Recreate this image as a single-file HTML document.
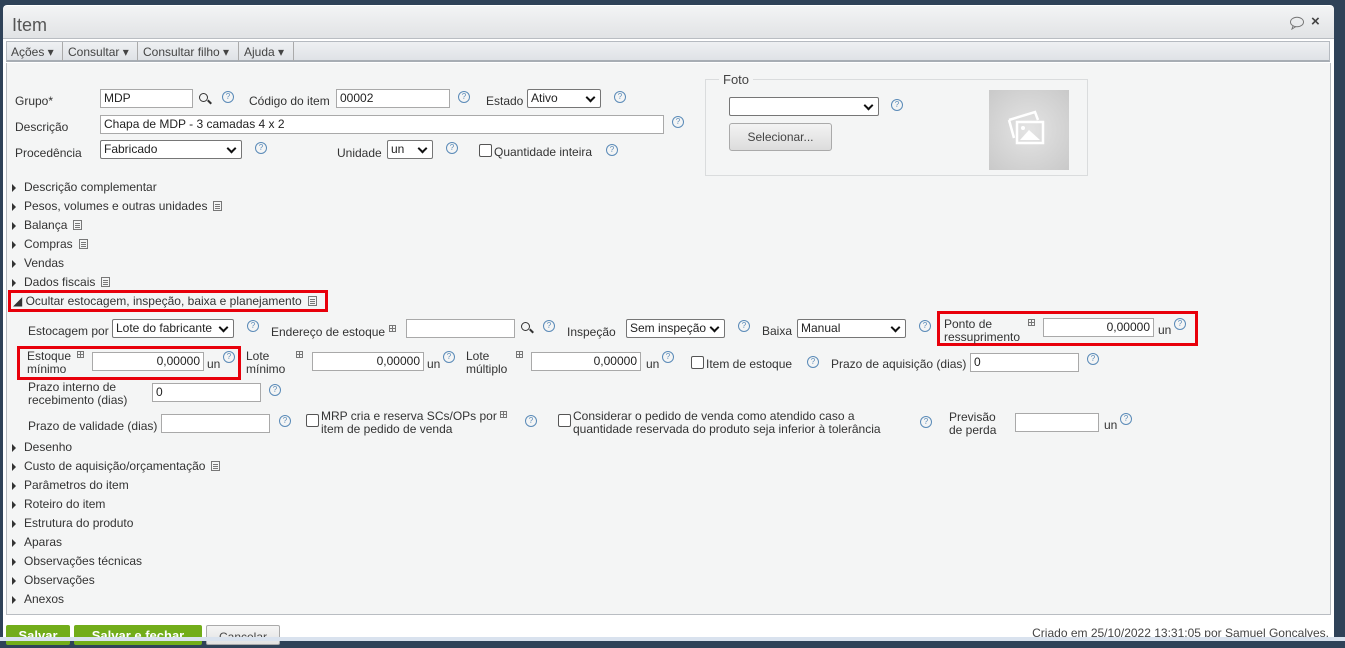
<!DOCTYPE html>
<html><head><meta charset="utf-8"><style>
*{box-sizing:border-box;margin:0;padding:0}
body{width:1345px;height:641px;overflow:hidden;background:#2f4258;font-family:"Liberation Sans","DejaVu Sans",sans-serif;font-size:12px;color:#333;position:relative}
.a{position:absolute;white-space:nowrap}
.in{position:absolute;background:#fff;border:1px solid #a9a9a9;height:19px;padding:0 3px;line-height:17px;font-size:12px;color:#222}
.r{text-align:right}
.sel{position:absolute;background:#fff;border:1px solid #767676;border-radius:2px;height:19px;padding:0 3px;line-height:17px;color:#222}
.sel:after{content:"";position:absolute;right:6px;top:4px;width:5px;height:5px;border-right:2px solid #111;border-bottom:2px solid #111;transform:rotate(45deg)}
.q{position:absolute;width:12px;height:12px;border:1px solid #5b8bb8;border-radius:50%;font-size:8px;line-height:10px;text-align:center;color:#5b8bb8}
.cb{position:absolute;width:13px;height:13px;border:1px solid #555;border-radius:2px;background:#fff}
.tr{position:absolute;left:12px;white-space:nowrap}
.tr:before{content:"";display:inline-block;border-left:4px solid #333;border-top:4px solid transparent;border-bottom:4px solid transparent;margin-right:8px;vertical-align:-1px}
.doc{display:inline-block;width:9px;height:10px;border:1px solid #777;margin-left:6px;vertical-align:-1px;background:linear-gradient(#777,#777) 1px 2px/5px 1px no-repeat,linear-gradient(#777,#777) 1px 4px/5px 1px no-repeat,linear-gradient(#777,#777) 1px 6px/5px 1px no-repeat}
.g{position:absolute;width:7px;height:7px;border:1px solid #777;background:linear-gradient(#777,#777) 2px 0/1px 7px no-repeat,linear-gradient(#777,#777) 0 2px/7px 1px no-repeat}
.rb{position:absolute;border:3px solid #e8000b}
.mag{position:absolute;width:9px;height:9px;border:1.5px solid #333;border-radius:50%}
.mag:after{content:"";position:absolute;left:7px;top:7px;width:5px;height:2px;background:#333;transform:rotate(45deg)}
</style></head><body>
<div class="a" style="left:3px;top:5px;width:1331px;height:636px;background:#fff;border-radius:4px 4px 0 0"></div>
<div class="a" style="left:3px;top:6px;width:1331px;height:33px;background:linear-gradient(#f3f4f5,#e1e3e5);border-radius:4px 4px 0 0;border-bottom:1px solid #b9bdc2"></div>
<div class="a" style="left:12px;top:15px;font-size:18px;color:#555">Item</div>
<svg class="a" style="left:1289px;top:16px" width="16" height="14"><ellipse cx="8" cy="6" rx="6.5" ry="4.8" fill="none" stroke="#777"/><path d="M4 10 L3 13 L7 10.5" fill="none" stroke="#777"/></svg>
<div class="a" style="left:1311px;top:13px;font-size:15px;font-weight:bold;color:#444">×</div>
<div class="a" style="left:6px;top:41px;width:1324px;height:21px;background:linear-gradient(#eef0f2,#dfe2e6);border:1px solid #b5bac0;border-bottom:2px solid #a7adb4"></div>
<div class="a" style="left:11px;top:45px;color:#444">Ações ▾</div><div class="a" style="left:62px;top:42px;width:1px;height:19px;background:#aaa"></div>
<div class="a" style="left:68px;top:45px;color:#444">Consultar ▾</div><div class="a" style="left:137px;top:42px;width:1px;height:19px;background:#aaa"></div>
<div class="a" style="left:143px;top:45px;color:#444">Consultar filho ▾</div><div class="a" style="left:238px;top:42px;width:1px;height:19px;background:#aaa"></div>
<div class="a" style="left:244px;top:45px;color:#444">Ajuda ▾</div><div class="a" style="left:293px;top:42px;width:1px;height:19px;background:#aaa"></div>
<div class="a" style="left:6px;top:63px;width:1325px;height:552px;background:#f4f5f5;border:1px solid #b9bdc2;border-top:none"></div>

<div class="a" style="left:15px;top:94px">Grupo*</div>
<div class="in" style="left:100px;top:89px;width:93px">MDP</div>
<div class="mag" style="left:199px;top:93px"></div>
<div class="q" style="left:222px;top:91px">?</div>
<div class="a" style="left:249px;top:94px">Código do item</div>
<div class="in" style="left:336px;top:89px;width:114px">00002</div>
<div class="q" style="left:458px;top:91px">?</div>
<div class="a" style="left:486px;top:94px">Estado</div>
<div class="sel" style="left:527px;top:89px;width:74px">Ativo</div>
<div class="q" style="left:614px;top:91px">?</div>
<div class="a" style="left:15px;top:120px">Descrição</div>
<div class="in" style="left:100px;top:115px;width:564px">Chapa de MDP - 3 camadas 4 x 2</div>
<div class="q" style="left:672px;top:116px">?</div>
<div class="a" style="left:15px;top:146px">Procedência</div>
<div class="sel" style="left:100px;top:140px;width:142px">Fabricado</div>
<div class="q" style="left:255px;top:142px">?</div>
<div class="a" style="left:337px;top:146px">Unidade</div>
<div class="sel" style="left:387px;top:140px;width:46px">un</div>
<div class="q" style="left:446px;top:142px">?</div>
<div class="cb" style="left:479px;top:144px"></div>
<div class="a" style="left:494px;top:145px">Quantidade inteira</div>
<div class="q" style="left:606px;top:144px">?</div>

<div class="a" style="left:705px;top:79px;width:383px;height:97px;border:1px solid #dadcdd"></div>
<div class="a" style="left:719px;top:72px;padding:0 4px;background:#f4f5f5;font-size:13px;color:#444">Foto</div>
<div class="sel" style="left:729px;top:97px;width:150px"></div>
<div class="q" style="left:891px;top:99px">?</div>
<div class="a" style="left:729px;top:123px;width:103px;height:28px;border:1px solid #aaa;border-radius:3px;background:linear-gradient(#f3f3f3,#dcdcdc);text-align:center;line-height:26px;color:#444">Selecionar...</div>
<div class="a" style="left:989px;top:90px;width:80px;height:80px;background:radial-gradient(circle,#e4e4e4,#c9c9c9)"></div>
<svg class="a" style="left:1005px;top:108px" width="44" height="40"><g fill="none" stroke="#fff" stroke-width="2.5"><path d="M4 12 L30 4 L33 12"/><path d="M4 12 L9 30"/><rect x="12" y="14" width="26" height="21"/></g><path d="M15 32 L24 22 L35 32Z" fill="#fff"/><circle cx="18" cy="20" r="2" fill="#fff"/></svg>

<div class="tr" style="top:180px">Descrição complementar</div>
<div class="tr" style="top:199px">Pesos, volumes e outras unidades<span class="doc"></span></div>
<div class="tr" style="top:218px">Balança<span class="doc"></span></div>
<div class="tr" style="top:237px">Compras<span class="doc"></span></div>
<div class="tr" style="top:256px">Vendas</div>
<div class="tr" style="top:275px">Dados fiscais<span class="doc"></span></div>
<div class="a" style="left:13px;top:294px;color:#333">◢&nbsp;Ocultar estocagem, inspeção, baixa e planejamento<span class="doc"></span></div>
<div class="rb" style="left:8px;top:290px;width:320px;height:22px"></div>

<div class="a" style="left:28px;top:324px">Estocagem por</div>
<div class="sel" style="left:112px;top:319px;width:122px">Lote do fabricante</div>
<div class="q" style="left:247px;top:320px">?</div>
<div class="a" style="left:271px;top:325px">Endereço de estoque</div>
<div class="g" style="left:389px;top:325px"></div>
<div class="in" style="left:406px;top:319px;width:109px"></div>
<div class="mag" style="left:521px;top:322px"></div>
<div class="q" style="left:543px;top:320px">?</div>
<div class="a" style="left:567px;top:325px">Inspeção</div>
<div class="sel" style="left:626px;top:319px;width:99px">Sem inspeção</div>
<div class="q" style="left:738px;top:320px">?</div>
<div class="a" style="left:762px;top:324px">Baixa</div>
<div class="sel" style="left:797px;top:319px;width:109px">Manual</div>
<div class="q" style="left:919px;top:320px">?</div>
<div class="rb" style="left:937px;top:311px;width:261px;height:35px"></div>
<div class="a" style="left:944px;top:318px;line-height:13px">Ponto de<br>ressuprimento</div>
<div class="g" style="left:1028px;top:319px"></div>
<div class="in r" style="left:1043px;top:318px;width:111px">0,00000</div>
<div class="a" style="left:1158px;top:323px">un</div>
<div class="q" style="left:1174px;top:318px">?</div>

<div class="rb" style="left:17px;top:346px;width:224px;height:34px"></div>
<div class="a" style="left:27px;top:350px;line-height:13px">Estoque<br>mínimo</div>
<div class="g" style="left:77px;top:351px"></div>
<div class="in r" style="left:92px;top:352px;width:112px">0,00000</div>
<div class="a" style="left:207px;top:357px">un</div>
<div class="q" style="left:223px;top:351px">?</div>
<div class="a" style="left:246px;top:350px;line-height:13px">Lote<br>mínimo</div>
<div class="g" style="left:296px;top:351px"></div>
<div class="in r" style="left:312px;top:352px;width:112px">0,00000</div>
<div class="a" style="left:427px;top:357px">un</div>
<div class="q" style="left:443px;top:351px">?</div>
<div class="a" style="left:466px;top:350px;line-height:13px">Lote<br>múltiplo</div>
<div class="g" style="left:516px;top:351px"></div>
<div class="in r" style="left:531px;top:352px;width:110px">0,00000</div>
<div class="a" style="left:646px;top:357px">un</div>
<div class="q" style="left:662px;top:351px">?</div>
<div class="cb" style="left:691px;top:356px"></div>
<div class="a" style="left:706px;top:357px">Item de estoque</div>
<div class="q" style="left:807px;top:356px">?</div>
<div class="a" style="left:831px;top:357px">Prazo de aquisição (dias)</div>
<div class="in" style="left:970px;top:353px;width:109px">0</div>
<div class="q" style="left:1087px;top:353px">?</div>

<div class="a" style="left:28px;top:381px;line-height:13px">Prazo interno de<br>recebimento (dias)</div>
<div class="in" style="left:152px;top:383px;width:109px">0</div>
<div class="q" style="left:269px;top:384px">?</div>

<div class="a" style="left:28px;top:419px">Prazo de validade (dias)</div>
<div class="in" style="left:161px;top:414px;width:109px"></div>
<div class="q" style="left:279px;top:415px">?</div>
<div class="cb" style="left:306px;top:414px"></div>
<div class="a" style="left:321px;top:410px;line-height:13px">MRP cria e reserva SCs/OPs por<br>item de pedido de venda</div>
<div class="g" style="left:500px;top:411px"></div>
<div class="q" style="left:525px;top:415px">?</div>
<div class="cb" style="left:558px;top:414px"></div>
<div class="a" style="left:573px;top:410px;line-height:13px">Considerar o pedido de venda como atendido caso a<br>quantidade reservada do produto seja inferior à tolerância</div>
<div class="q" style="left:920px;top:416px">?</div>
<div class="a" style="left:949px;top:411px;line-height:13px">Previsão<br>de perda</div>
<div class="in" style="left:1015px;top:413px;width:84px"></div>
<div class="a" style="left:1104px;top:418px">un</div>
<div class="q" style="left:1120px;top:413px">?</div>

<div class="tr" style="top:440px">Desenho</div>
<div class="tr" style="top:459px">Custo de aquisição/orçamentação<span class="doc"></span></div>
<div class="tr" style="top:478px">Parâmetros do item</div>
<div class="tr" style="top:497px">Roteiro do item</div>
<div class="tr" style="top:516px">Estrutura do produto</div>
<div class="tr" style="top:535px">Aparas</div>
<div class="tr" style="top:554px">Observações técnicas</div>
<div class="tr" style="top:573px">Observações</div>
<div class="tr" style="top:592px">Anexos</div>

<div class="a" style="left:6px;top:625px;width:64px;height:20px;background:#72ad1a;border-radius:2px;color:#fff;font-weight:bold;text-align:center;line-height:22px;font-size:13px">Salvar</div>
<div class="a" style="left:74px;top:625px;width:128px;height:20px;background:#72ad1a;border-radius:2px;color:#fff;font-weight:bold;text-align:center;line-height:22px;font-size:13px">Salvar e fechar</div>
<div class="a" style="left:206px;top:625px;width:74px;height:20px;background:linear-gradient(#f5f5f5,#e2e2e2);border:1px solid #aaa;border-radius:2px;text-align:center;line-height:22px;color:#444">Cancelar</div>
<div class="a" style="right:16px;top:626px;color:#444">Criado em 25/10/2022 13:31:05 por Samuel Gonçalves.</div>
<div class="a" style="left:0;top:637px;width:1345px;height:4px;background:#d9e2ee"></div>
</body></html>
